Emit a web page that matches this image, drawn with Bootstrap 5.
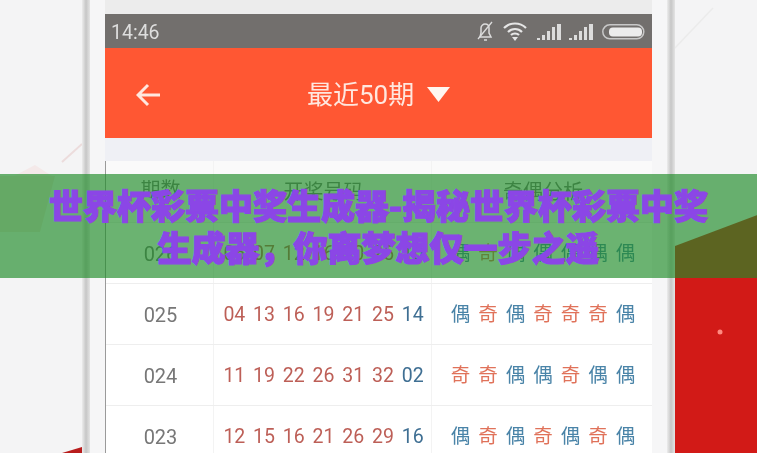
<!DOCTYPE html>
<html lang="zh-CN">
<head>
  <meta charset="UTF-8">
  <title>世界杯彩票中奖生成器</title>
  <meta name="viewport" content="width=device-width, initial-scale=1" />
  <link href="https://cdn.jsdelivr.net/npm/bootstrap@5.3.0/dist/css/bootstrap.min.css" rel="stylesheet" />
  <style>
    body {
      margin: 0;
      background-color: #f4f4f5;
      font-family: Roboto, "Noto Sans CJK SC", sans-serif;
    }

    .stage {
      width: 757px;
      height: 453px;
      overflow: hidden;
    }

    .blurred {
      filter: blur(0.7px);
    }

    .side-art {
      display: block;
      flex: none;
    }

    .frame-line {
      width: 8px;
      flex: none;
      background: linear-gradient(90deg, #ececec, #c6c6c6 50%, #e4e4e4);
    }

    .frame-gap {
      width: 15px;
      flex: none;
      background-color: #f6f6f7;
    }

    .phone {
      width: 547px;
      flex: none;
      padding-top: 14px;
      background-color: #ececec;
    }

    .status-row {
      height: 34px;
      padding: 0 6px 0 6px;
      background-color: #726f6d;
      color: #dedede;
      font-size: 19.5px;
    }

    .status-time {
      padding-top: 3px;
    }

    .app-header {
      height: 90px;
      padding: 4px 31px 0;
      background-color: #ff5733;
      color: #ffe7df;
      font-size: 26px;
    }

    .app-title {
      margin-left: 146px;
      margin-right: 13px;
    }

    .filter-strip {
      height: 23px;
      background-color: #eff0f5;
    }

    .draw-table {
      background-color: #fff;
      border-left: 1px solid #9a9a9a;
    }

    .draw-row {
      height: 61px;
      border-bottom: 1px solid #eeeeee;
      color: #777;
      font-size: 19.5px;
    }

    .head-row {
      height: 62px;
      background-color: #fafafa;
      font-size: 20px;
      padding-bottom: 2px;
    }

    .col-issue {
      width: 108px;
      flex: none;
      padding-left: 2px;
      text-align: center;
      align-self: stretch;
      font-size: 20px;
      line-height: 62px;
      border-right: 1px solid #f3f3f3;
    }

    .head-row .col-issue {
      line-height: 58px;
    }

    .col-numbers {
      width: 218px;
      flex: none;
      gap: 7.8px;
      padding: 2px 0 0 2px;
      align-self: stretch;
      border-right: 1px solid #f3f3f3;
    }

    .col-parity {
      flex: 1;
      gap: 8px;
      padding: 2px 0 0 2px;
    }

    .ball-red { color: #bd5f57; }
    .ball-blue { color: #3f6f93; }
    .odd { color: #e0725a; }
    .even { color: #4a84a8; }

    .promo-banner {
      position: absolute;
      top: 174px;
      left: 0;
      width: 757px;
      height: 104px;
      padding: 0 45px;
      background-color: rgba(30, 140, 40, 0.66);
      color: #8b46e6;
      font-family: "Noto Sans CJK SC", sans-serif;
      font-size: 34px;
      font-weight: 900;
      line-height: 42px;
      -webkit-text-stroke: 1.2px #8b46e6;
    }
  </style>
</head>
<body>
<div class="stage position-relative d-flex">

  <svg class="side-art blurred" width="82" height="453" viewBox="0 0 82 453">
    <path d="M82 144 L62 162" stroke="#ecdcdc" stroke-width="2" />
    <path d="M14 176 L35 165 L52 176" fill="#f4e9e9" />
    <path d="M0 176 H55 L40 232 H0 Z" fill="#ece2dd" />
    <path d="M62 453 L82 447 V453 Z" fill="#b81c1c" />
  </svg>
  <div class="frame-line"></div>
  <div class="frame-gap"></div>

  <div class="phone blurred">
    <div class="status-row d-flex align-items-center justify-content-between">
      <span class="status-time">14:46</span>
      <svg width="170" height="24" viewBox="0 0 170 24">
        <!-- muted bell -->
        <path d="M4 18 H15 L13 14 V9 C13 6 11 5 9 5 C7 5 5 7 5 9 V14 Z M8 21 H11" fill="none" stroke="#dcdcdc" stroke-width="1.5" />
        <path d="M2 20 L16 3" stroke="#dcdcdc" stroke-width="1.3" />
        <!-- wifi -->
        <path d="M28 9 C34 3 44 3 50 9 M32 13 C36 9 42 9 46 13 M35 16 C37 14 41 14 43 16" fill="none" stroke="#e6e6e6" stroke-width="2.2" />
        <path d="M36 18 L39 22 L42 18 Z" fill="#e6e6e6" />
        <!-- signal bars -->
        <g fill="#dcdcdc">
          <path d="M61 19 h3 v2 h-3 Z M66 16 h3 v5 h-3 Z M71 12 h3 v9 h-3 Z M76 8 h3 v13 h-3 Z M81 5 h4 v16 h-4 Z" />
          <path d="M93 19 h3 v2 h-3 Z M98 16 h3 v5 h-3 Z M103 12 h3 v9 h-3 Z M108 8 h3 v13 h-3 Z M113 5 h4 v16 h-4 Z" />
        </g>
        <!-- battery -->
        <rect x="126.8" y="5.8" width="41" height="14" rx="7" fill="none" stroke="#c8c8c8" stroke-width="1.5" />
        <rect x="133" y="8.5" width="33" height="9" rx="4" fill="#ececec" />
      </svg>
    </div>

    <div class="app-header d-flex align-items-center">
      <svg width="25" height="26" viewBox="0 0 25 26">
        <path d="M24 13 H3 M12 3 L2 13 L12 23" fill="none" stroke="#ffe7df" stroke-width="3" />
      </svg>
      <span class="app-title">最近50期</span>
      <svg width="23" height="16" viewBox="0 0 23 16">
        <path d="M0 0 H23 L11.5 15 Z" fill="#fff6f0" />
      </svg>
    </div>

    <div class="filter-strip"></div>

    <div class="draw-table">
      <div class="draw-row head-row d-flex align-items-center">
        <div class="col-issue">期数</div>
        <div class="col-numbers d-flex align-items-center justify-content-center">开奖号码</div>
        <div class="col-parity d-flex align-items-center justify-content-center">奇偶分析</div>
      </div>
      <div class="draw-row d-flex align-items-center">
        <div class="col-issue">026</div>
        <div class="col-numbers d-flex align-items-center justify-content-center"><span class="ball-red">06</span><span class="ball-red">07</span><span class="ball-red">12</span><span class="ball-red">16</span><span class="ball-red">20</span><span class="ball-red">25</span><span class="ball-blue">10</span></div>
        <div class="col-parity d-flex align-items-center justify-content-center"><span class="even">偶</span><span class="odd">奇</span><span class="even">偶</span><span class="even">偶</span><span class="even">偶</span><span class="even">偶</span><span class="even">偶</span></div>
      </div>
      <div class="draw-row d-flex align-items-center">
        <div class="col-issue">025</div>
        <div class="col-numbers d-flex align-items-center justify-content-center"><span class="ball-red">04</span><span class="ball-red">13</span><span class="ball-red">16</span><span class="ball-red">19</span><span class="ball-red">21</span><span class="ball-red">25</span><span class="ball-blue">14</span></div>
        <div class="col-parity d-flex align-items-center justify-content-center"><span class="even">偶</span><span class="odd">奇</span><span class="even">偶</span><span class="odd">奇</span><span class="odd">奇</span><span class="odd">奇</span><span class="even">偶</span></div>
      </div>
      <div class="draw-row d-flex align-items-center">
        <div class="col-issue">024</div>
        <div class="col-numbers d-flex align-items-center justify-content-center"><span class="ball-red">11</span><span class="ball-red">19</span><span class="ball-red">22</span><span class="ball-red">26</span><span class="ball-red">31</span><span class="ball-red">32</span><span class="ball-blue">02</span></div>
        <div class="col-parity d-flex align-items-center justify-content-center"><span class="odd">奇</span><span class="odd">奇</span><span class="even">偶</span><span class="even">偶</span><span class="odd">奇</span><span class="even">偶</span><span class="even">偶</span></div>
      </div>
      <div class="draw-row d-flex align-items-center">
        <div class="col-issue">023</div>
        <div class="col-numbers d-flex align-items-center justify-content-center"><span class="ball-red">12</span><span class="ball-red">15</span><span class="ball-red">16</span><span class="ball-red">21</span><span class="ball-red">26</span><span class="ball-red">29</span><span class="ball-blue">16</span></div>
        <div class="col-parity d-flex align-items-center justify-content-center"><span class="even">偶</span><span class="odd">奇</span><span class="even">偶</span><span class="odd">奇</span><span class="even">偶</span><span class="odd">奇</span><span class="even">偶</span></div>
      </div>
    </div>
  </div>

  <div class="frame-gap"></div>
  <div class="frame-line"></div>
  <svg class="side-art blurred" width="85" height="453" viewBox="0 0 85 453">
    <path d="M-2 50 L38 8" stroke="#ebebeb" stroke-width="1.5" />
    <path d="M0 246 L85 214 V453 H0 Z" fill="#d21a17" />
    <circle cx="45" cy="332" r="2.5" fill="#ff8a80" />
  </svg>

  <div class="promo-banner d-flex align-items-center justify-content-center text-center">世界杯彩票中奖生成器-揭秘世界杯彩票中奖生成器，你离梦想仅一步之遥</div>
</div>
<script src="https://cdn.jsdelivr.net/npm/bootstrap@5.3.0/dist/js/bootstrap.bundle.min.js"></script>
</body>
</html>
